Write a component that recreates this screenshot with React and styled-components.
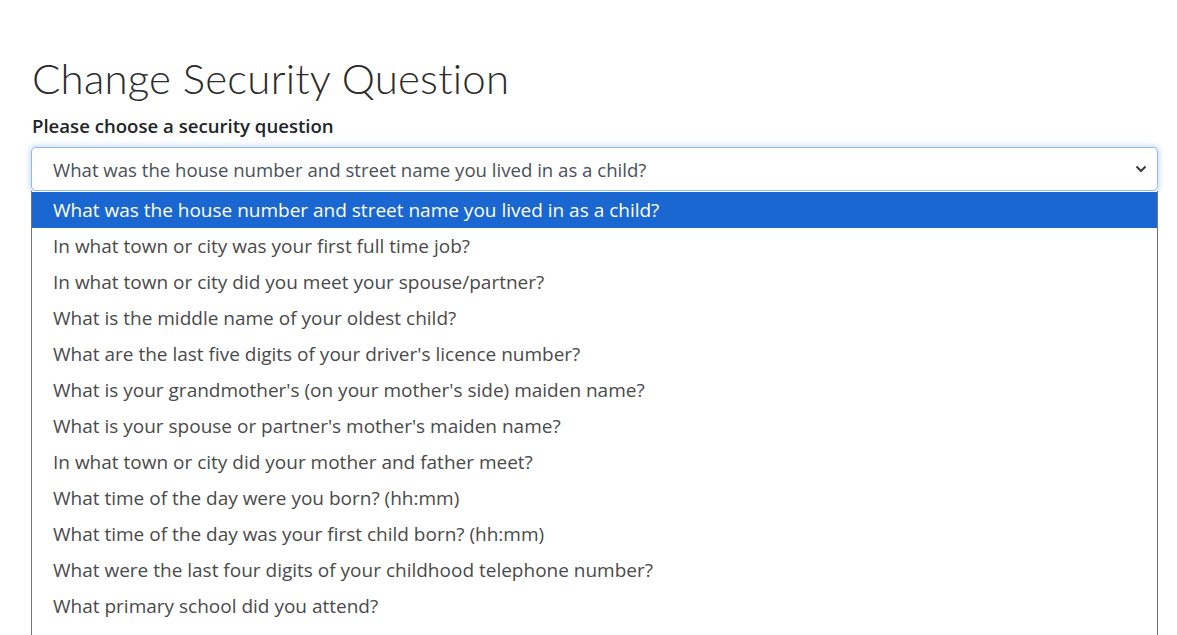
import React from "react";
import styled, { createGlobalStyle } from "styled-components";

const questions = [
  "What was the house number and street name you lived in as a child?",
  "In what town or city was your first full time job?",
  "In what town or city did you meet your spouse/partner?",
  "What is the middle name of your oldest child?",
  "What are the last five digits of your driver's licence number?",
  "What is your grandmother's (on your mother's side) maiden name?",
  "What is your spouse or partner's mother's maiden name?",
  "In what town or city did your mother and father meet?",
  "What time of the day were you born? (hh:mm)",
  "What time of the day was your first child born? (hh:mm)",
  "What were the last four digits of your childhood telephone number?",
  "What primary school did you attend?",
  "What was the name of your first full time employer?",
];

const GlobalStyle = createGlobalStyle`
  html, body {
    margin: 0;
    background: #fff;
    overflow: hidden;
  }
  body {
    font-family: "Open Sans", "Liberation Sans", sans-serif;
    color: #212529;
  }
`;

const Page = styled.div`
  padding: 52px 19px 0 31px;
  height: 635px;
  box-sizing: border-box;
`;

const Title = styled.h1`
  margin: 0 0 0 1px;
  font-family: Lato, "Open Sans", sans-serif;
  font-weight: 300;
  font-size: 42px;
  line-height: 52px;
  color: #2b2b2b;
  letter-spacing: 0.2px;
`;

const Label = styled.label`
  display: block;
  margin: 10px 0 9px 1px;
  font-weight: 600;
  font-size: 18.6px;
  line-height: 24px;
  color: #212529;
`;

const Field = styled.div`
  position: relative;
`;

const Select = styled.div`
  display: flex;
  align-items: center;
  justify-content: space-between;
  height: 44px;
  padding: 0 10px 0 21px;
  box-sizing: border-box;
  border: 1px solid #8fbcf0;
  border-radius: 5px;
  box-shadow: 0 0 5px 2px rgba(120, 170, 235, 0.35);
  background: #fff;
  font-size: 18.6px;
  color: #495057;
`;

const Chevron = () => (
  <svg width="12" height="8" viewBox="0 0 12 8">
    <path d="M1.5 1.5 6 6l4.5-4.5" fill="none" stroke="#343a40" strokeWidth="2" />
  </svg>
);

const List = styled.ul`
  list-style: none;
  margin: 0;
  padding: 1px 0 0;
  border-left: 1px solid #767676;
  border-right: 1px solid #767676;
  width: 1127px;
  box-sizing: border-box;
  background: #fff;
`;

const Option = styled.li`
  height: 36px;
  padding-left: 21px;
  display: flex;
  align-items: center;
  font-size: 19px;
  color: ${(p) => (p.$active ? "#fff" : "#4a4a4a")};
  background: ${(p) => (p.$active ? "#1a67d2" : "transparent")};
  white-space: nowrap;
`;

export default function App() {
  return (
    <>
      <GlobalStyle />
      <Page>
        <Title>Change Security Question</Title>
        <Label>Please choose a security question</Label>
        <Field>
          <Select>
            <span>{questions[0]}</span>
            <Chevron />
          </Select>
          <List>
            {questions.map((q, i) => (
              <Option key={i} $active={i === 0}>
                {q}
              </Option>
            ))}
          </List>
        </Field>
      </Page>
    </>
  );
}
